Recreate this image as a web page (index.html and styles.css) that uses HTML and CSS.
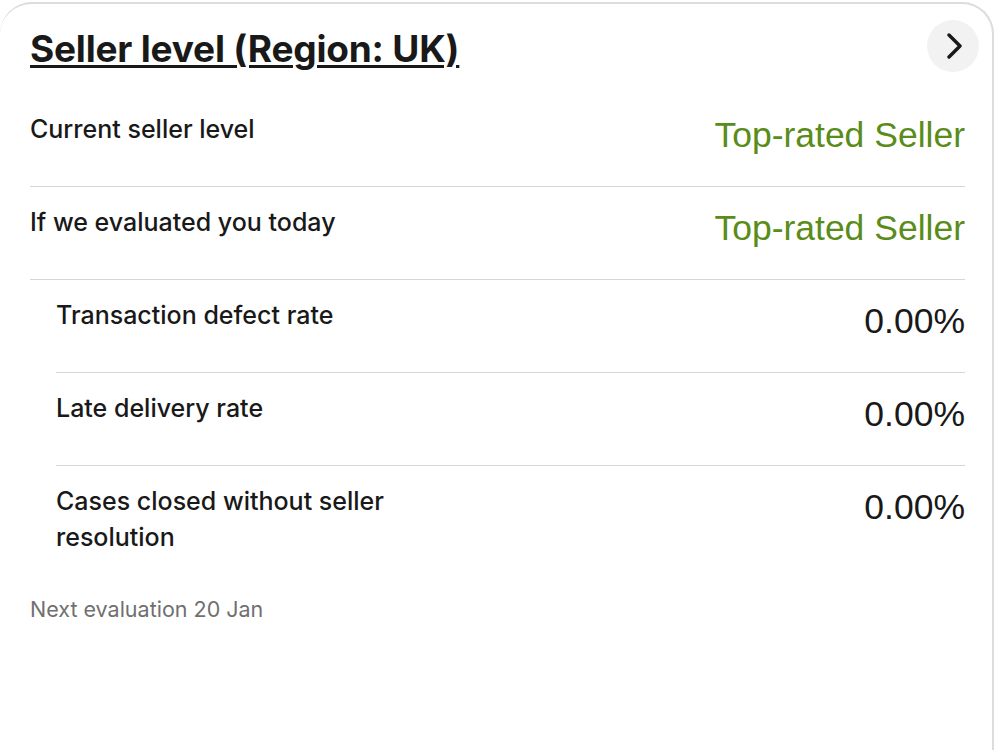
FILE: index.html
```html
<!DOCTYPE html>
<html lang="en">

<head>
    <meta charset="UTF-8">
    <meta name="viewport" content="width=device-width, initial-scale=1.0">
    <title>Seller level</title>
    <link rel="stylesheet" href="styles.css">
</head>

<body>
    <div class="card">
        <div class="card-header">
            <h2 class="card-title"><a href="#">Seller level (Region: UK)</a></h2>
            <button class="icon-btn" aria-label="Open seller level">
                <svg width="22" height="26" viewBox="0 0 22 26" aria-hidden="true">
                    <path d="M6 2 L17 13 L6 24" fill="none" stroke="#191919" stroke-width="3.4"
                        stroke-linecap="round" stroke-linejoin="round" />
                </svg>
            </button>
        </div>

        <div class="metric">
            <span class="metric-label">Current seller level</span>
            <span class="metric-value good">Top-rated Seller</span>
        </div>
        <div class="metric">
            <span class="metric-label">If we evaluated you today</span>
            <span class="metric-value good">Top-rated Seller</span>
        </div>
        <div class="metric sub">
            <span class="metric-label">Transaction defect rate</span>
            <span class="metric-value">0.00%</span>
        </div>
        <div class="metric sub">
            <span class="metric-label">Late delivery rate</span>
            <span class="metric-value">0.00%</span>
        </div>
        <div class="metric sub last">
            <span class="metric-label">Cases closed without seller resolution</span>
            <span class="metric-value">0.00%</span>
        </div>

        <p class="next-eval">Next evaluation 20 Jan</p>
    </div>
</body>

</html>
```

FILE: styles.css
```css
body {
    margin: 0;
    padding: 0;
    background-color: #fff;
    font-family: Inter, 'Open Sans', sans-serif;
    color: #191919;
    overflow: hidden;
}

.card {
    margin: 2px 6px 0 0;
    min-height: 820px;
    padding: 16px 27px 0 30px;
    border: 2px solid #dcdcdc;
    border-left: none;
    border-bottom: none;
    border-radius: 32px 32px 0 0;
}

.card-header {
    display: flex;
    justify-content: space-between;
    align-items: center;
    margin-right: -14px;
    margin-bottom: 22px;
}

.card-title {
    margin: 0;
    font-size: 37px;
    font-weight: 700;
    letter-spacing: -0.2px;
    line-height: 52px;
    position: relative;
    top: 3px;
}

.card-title a {
    color: #191919;
    text-decoration: underline;
    text-decoration-thickness: 3px;
    text-underline-offset: 3px;
}

.icon-btn {
    width: 52px;
    height: 52px;
    border: none;
    border-radius: 50%;
    background-color: #f2f2f2;
    display: flex;
    align-items: center;
    justify-content: center;
    padding: 0 0 0 2px;
    cursor: pointer;
}

.metric {
    display: flex;
    justify-content: space-between;
    align-items: flex-start;
    padding: 17px 0 27px;
    border-bottom: 1px solid #d6d6d6;
}

.metric.sub {
    margin-left: 26px;
}

.metric.last {
    border-bottom: none;
}

.metric-label {
    max-width: 370px;
    font-size: 25px;
    font-weight: 500;
    line-height: 36px;
}

.metric-value {
    font-family: 'Liberation Sans', Arial, sans-serif;
    font-size: 35.5px;
    line-height: 48px;
}

.metric-value.good {
    color: #5a8c1a;
}

.next-eval {
    margin: 13px 0 0;
    font-size: 21.5px;
    line-height: 28px;
    color: #707070;
}
```
